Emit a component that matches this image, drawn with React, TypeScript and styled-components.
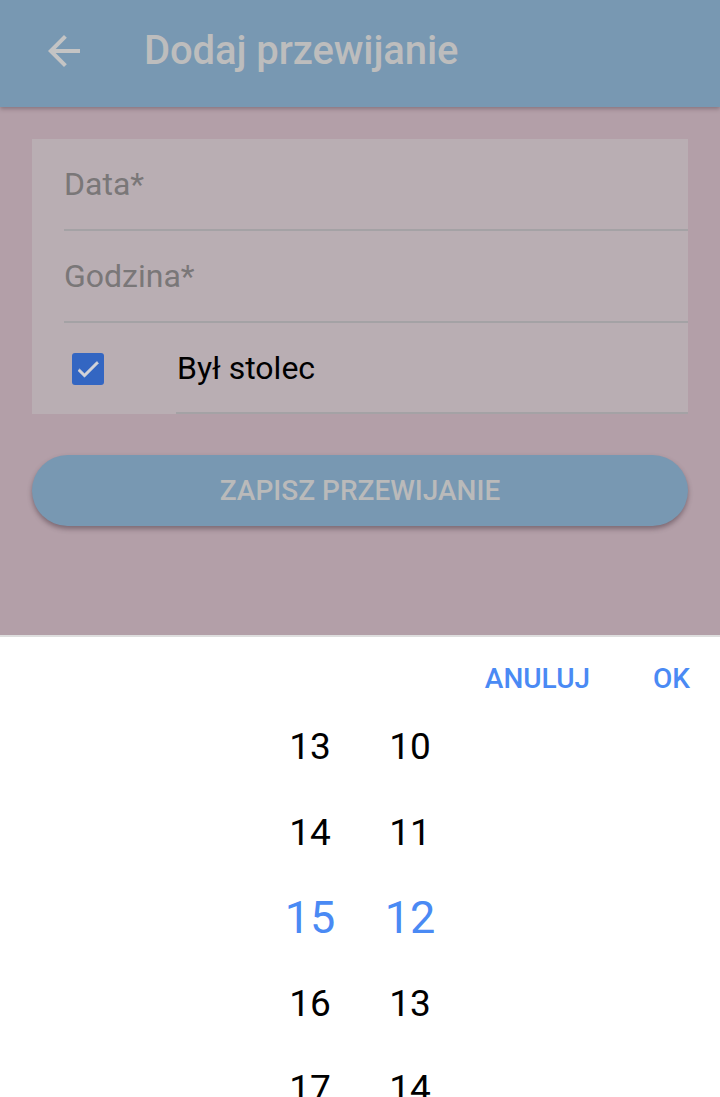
import React from "react";
import styled, { createGlobalStyle } from "styled-components";

const Global = createGlobalStyle`
  html, body { margin: 0; padding: 0; }
  body { font-family: Roboto, "Noto Sans", Arial, sans-serif; }
  #root { height: 1097px; }
`;

const Screen = styled.div`
  width: 720px;
  height: 1097px;
  display: flex;
  flex-direction: column;
  overflow: hidden;
  background: #b39fa8;
`;

const Header = styled.header`
  height: 107px;
  flex: none;
  display: flex;
  align-items: center;
  padding-left: 40px;
  padding-bottom: 6px;
  box-sizing: border-box;
  background: #7898b2;
  box-shadow: 0 2px 4px rgba(60, 40, 50, 0.35);
  position: relative;
  z-index: 1;
`;

const IconButton = styled.div`
  width: 48px;
  height: 48px;
  display: flex;
  align-items: center;
  justify-content: center;
  margin-right: 56px;
`;

const Title = styled.h1`
  margin: 0;
  font-size: 40px;
  font-weight: 500;
  color: #bdbdbd;
  letter-spacing: -0.1px;
`;

const Content = styled.main`
  flex: 1;
  padding: 32px 32px 0;
  display: flex;
  flex-direction: column;
`;

const Card = styled.section`
  background: #b9aeb3;
  display: flex;
  flex-direction: column;
`;

const FieldRow = styled.div`
  margin-left: 32px;
  height: 92px;
  box-sizing: border-box;
  border-bottom: 2px solid #a4a2a5;
  display: flex;
  align-items: center;
  font-size: 32px;
  color: #7a7778;
`;

const CheckRow = styled.div`
  height: 91px;
  display: flex;
`;

const CheckCell = styled.div`
  width: 144px;
  flex: none;
  display: flex;
  align-items: center;
  padding-left: 40px;
  box-sizing: border-box;
  background: #b9aeb3;
`;

const CheckBox = styled.div`
  width: 32px;
  height: 32px;
  border-radius: 3px;
  background: #3366c2;
  display: flex;
  align-items: center;
  justify-content: center;
`;

const CheckLabel = styled.div`
  flex: 1;
  display: flex;
  align-items: center;
  padding-left: 1px;
  border-bottom: 2px solid #a4a2a5;
  font-size: 32px;
  color: #000;
`;

const SaveButton = styled.button`
  margin-top: 41px;
  height: 71px;
  border: none;
  border-radius: 36px;
  background: #7898b2;
  box-shadow: 0 3px 5px rgba(60, 40, 50, 0.45);
  font-family: Roboto, Arial, sans-serif;
  font-size: 28px;
  font-weight: 500;
  color: #bababa;
  text-transform: uppercase;
`;

const Sheet = styled.section`
  height: 462px;
  flex: none;
  background: #fff;
  border-top: 2px solid #dedede;
  box-sizing: border-box;
  display: flex;
  flex-direction: column;
`;

const Actions = styled.div`
  height: 67px;
  flex: none;
  display: flex;
  justify-content: flex-end;
  align-items: flex-start;
  padding-top: 21px;
  padding-right: 30px;
  box-sizing: border-box;
  gap: 63px;
`;

const ActionButton = styled.span`
  font-size: 28px;
  line-height: 42px;
  font-weight: 500;
  color: #4a8af4;
`;

const Picker = styled.div`
  display: flex;
  justify-content: center;
`;

const Column = styled.div`
  width: 100px;
  display: flex;
  flex-direction: column;
  align-items: center;
`;

const Cell = styled.div<{ $selected?: boolean }>`
  height: 85.5px;
  display: flex;
  align-items: center;
  justify-content: center;
  font-size: ${(p) => (p.$selected ? "45px" : "37px")};
  color: ${(p) => (p.$selected ? "#4a8af4" : "#000")};
`;

const hours = [13, 14, 15, 16, 17];
const minutes = [10, 11, 12, 13, 14];

export default function App() {
  return (
    <>
      <Global />
      <Screen>
        <Header>
          <IconButton>
            <svg width="48" height="48" viewBox="0 0 24 24">
              <path
                fill="#c4c4c4"
                d="M20 11H7.83l5.59-5.59L12 4l-8 8 8 8 1.41-1.41L7.83 13H20v-2z"
              />
            </svg>
          </IconButton>
          <Title>Dodaj przewijanie</Title>
        </Header>
        <Content>
          <Card>
            <FieldRow>Data*</FieldRow>
            <FieldRow>Godzina*</FieldRow>
            <CheckRow>
              <CheckCell>
                <CheckBox>
                  <svg width="28" height="28" viewBox="0 0 24 24">
                    <path
                      fill="#d4d4d8"
                      d="M9 16.17L4.83 12l-1.42 1.41L9 19 21 7l-1.41-1.41z"
                      stroke="#d4d4d8"
                      strokeWidth="0.6"
                    />
                  </svg>
                </CheckBox>
              </CheckCell>
              <CheckLabel>Był stolec</CheckLabel>
            </CheckRow>
          </Card>
          <SaveButton>Zapisz przewijanie</SaveButton>
        </Content>
        <Sheet>
          <Actions>
            <ActionButton>ANULUJ</ActionButton>
            <ActionButton>OK</ActionButton>
          </Actions>
          <Picker>
            <Column>
              {hours.map((h) => (
                <Cell key={h} $selected={h === 15}>
                  {h}
                </Cell>
              ))}
            </Column>
            <Column>
              {minutes.map((m) => (
                <Cell key={m} $selected={m === 12}>
                  {m}
                </Cell>
              ))}
            </Column>
          </Picker>
        </Sheet>
      </Screen>
    </>
  );
}
